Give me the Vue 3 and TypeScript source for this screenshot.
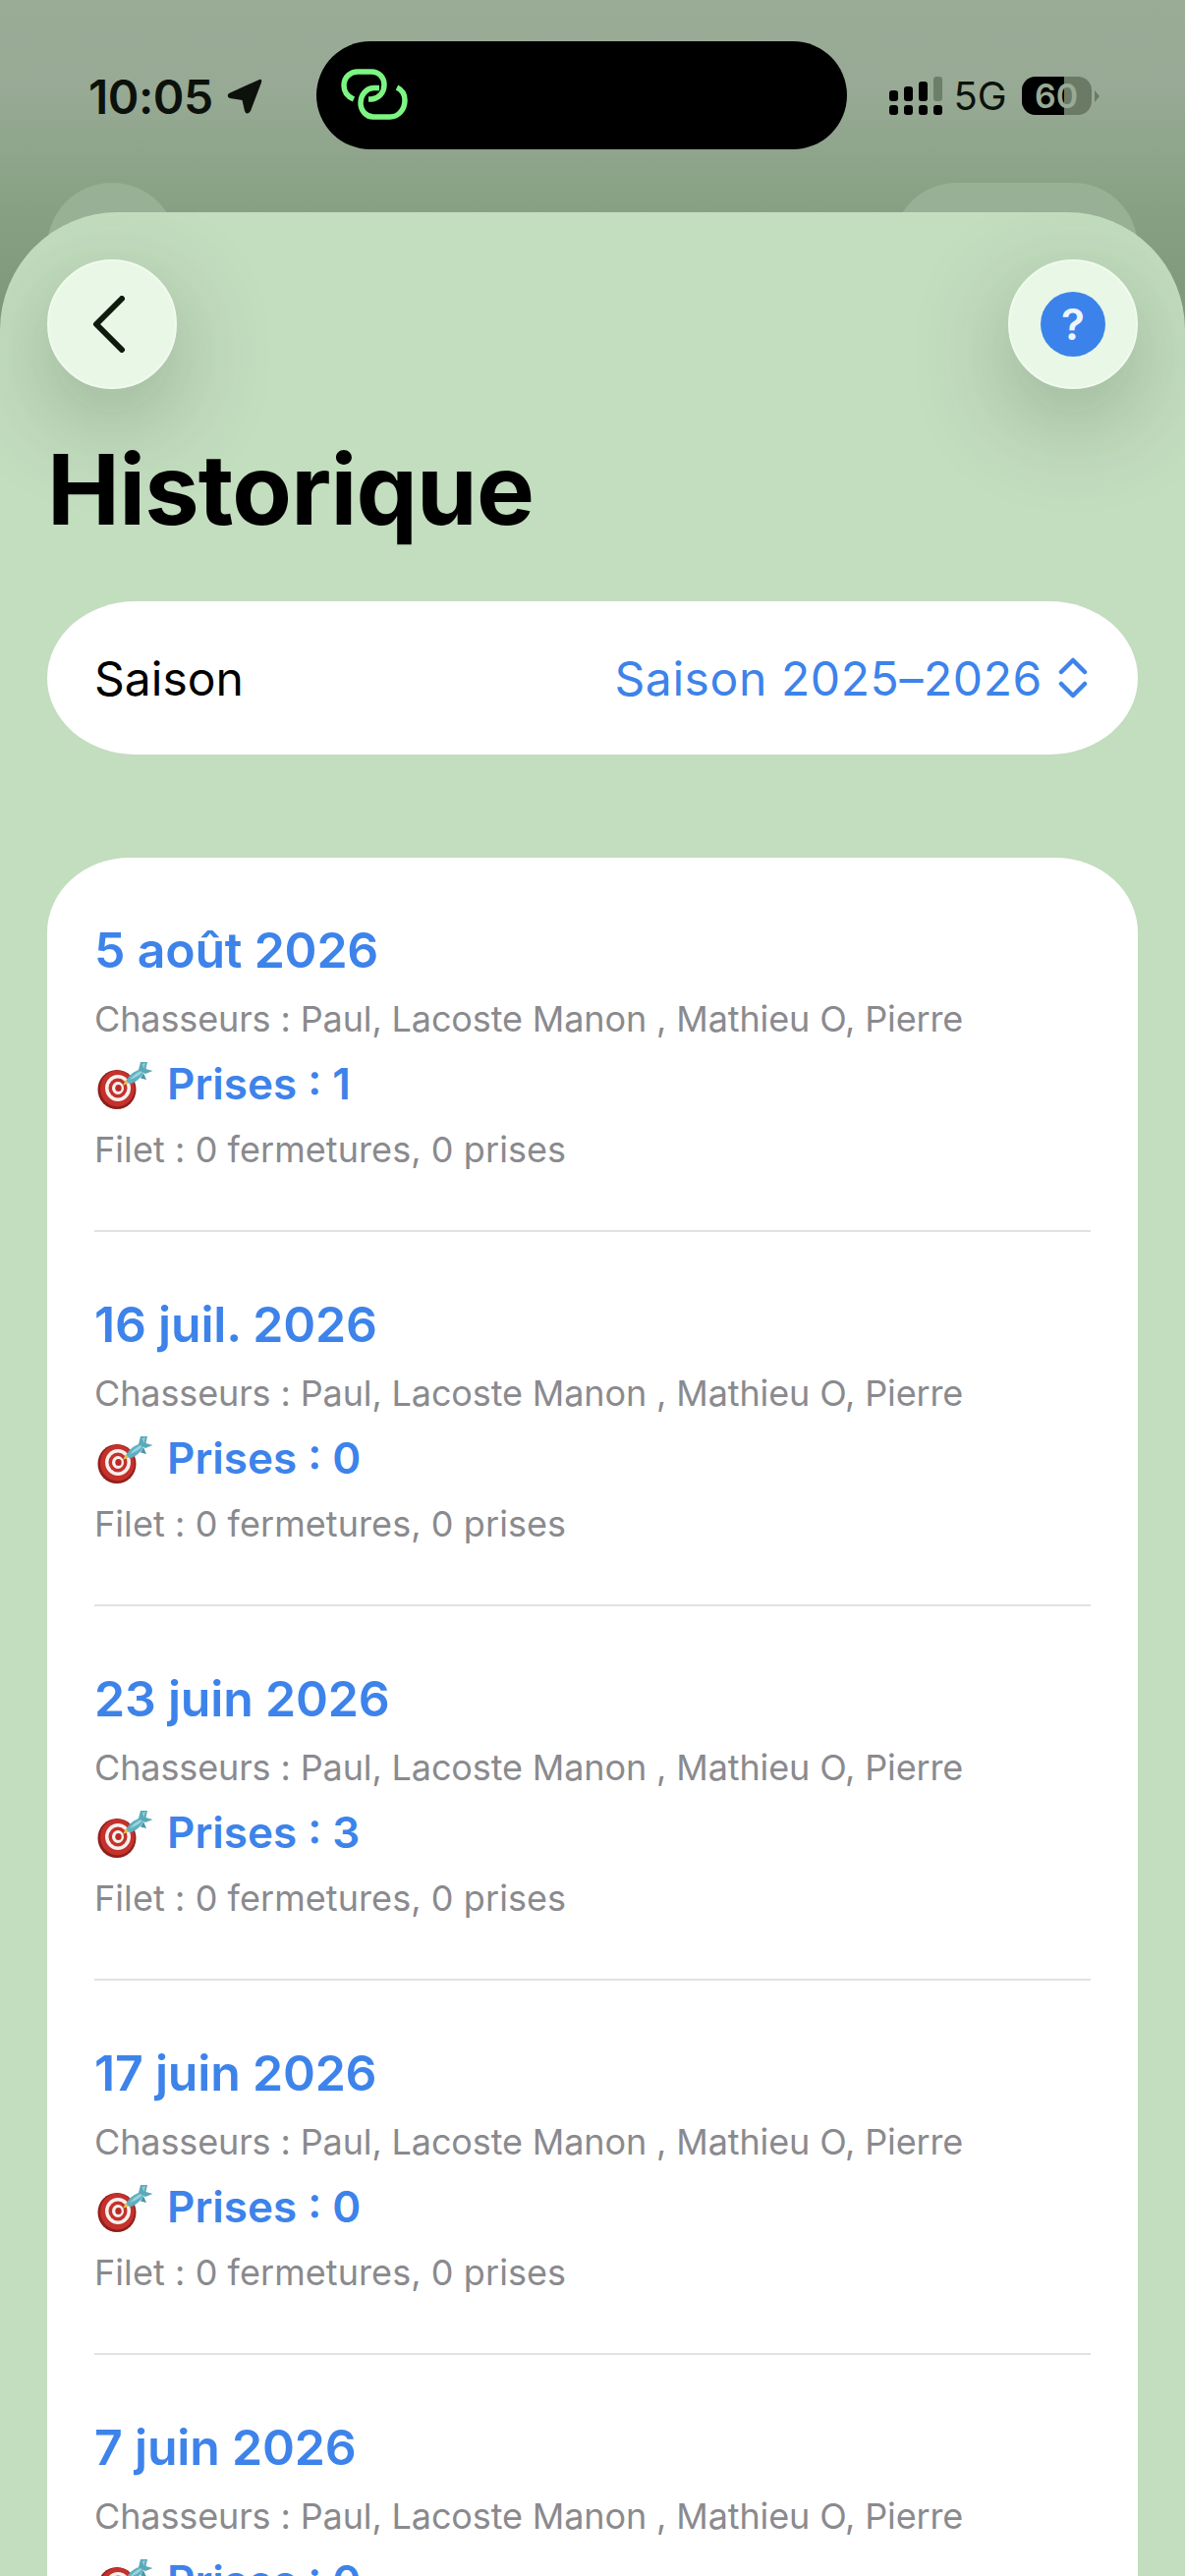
<script setup lang="ts">
interface Hunt {
  date: string;
  catches: number;
}

const hunts: Hunt[] = [
  { date: '5 août 2026', catches: 1 },
  { date: '16 juil. 2026', catches: 0 },
  { date: '23 juin 2026', catches: 3 },
  { date: '17 juin 2026', catches: 0 },
  { date: '7 juin 2026', catches: 0 },
];
</script>

<template>
  <div class="page">
    <div class="status">
      <div class="clock">
        <span class="time">10:05</span>
        <svg class="arrow" viewBox="0 0 36 36">
          <path d="M33 1 Q36 0 35 4 L24 33 Q20 38 18 33 L15.500 22 L3 20 Q-1 18 2 15 Z" fill="#0c120b" />
        </svg>
      </div>
      <div class="island">
        <svg class="link" viewBox="0 0 90 70" fill="none" stroke="#7cf582" stroke-width="5.500">
          <path d="M25 41 C18 38 15 33 15 27 C15 18 22 13 29 13 H43 C51 13 56 19 56 26 C56 35 50 40 43 41 H40" />
          <path d="M69 29 C75 32 77 37 77 42 C77 52 70 59 62 59 H45 C38 59 32 53 32 45 C32 36 38 30 45 29.500 H51" />
        </svg>
      </div>
      <div class="indicators">
        <svg class="signal" viewBox="0 0 54 39">
          <rect x="0" y="14" width="9" height="11" rx="3" />
          <rect x="15" y="10" width="9" height="15" rx="3" />
          <rect x="30" y="5" width="9" height="20" rx="3" />
          <rect x="45" y="0" width="9" height="25" rx="3" fill="#6c7f69" />
          <rect x="0" y="29" width="9" height="10" rx="3" />
          <rect x="15" y="29" width="9" height="10" rx="3" />
          <rect x="30" y="29" width="9" height="10" rx="3" />
          <rect x="45" y="29" width="9" height="10" rx="3" />
        </svg>
        <span class="network">5G</span>
        <div class="battery">
          <div class="battery-level"></div>
          <span class="battery-text">60</span>
        </div>
        <div class="battery-nub"></div>
      </div>
    </div>

    <div class="peeks">
      <div class="peek peek-left"></div>
      <div class="peek peek-right"></div>
    </div>

    <div class="sheet">
      <div class="toolbar">
        <button class="round">
          <svg class="chevron" viewBox="0 0 34 58" fill="none" stroke="#0f1a0e" stroke-width="6" stroke-linecap="round" stroke-linejoin="round">
            <path d="M30 3 L4 29 L30 55" />
          </svg>
        </button>
        <button class="round">
          <span class="help">?</span>
        </button>
      </div>

      <h1 class="title">Historique</h1>

      <div class="season">
        <span class="season-label">Saison</span>
        <span class="season-value">
          Saison 2025–2026
          <svg class="updown" viewBox="0 0 30 42" fill="none" stroke="#3d83ea" stroke-width="4.500" stroke-linecap="round" stroke-linejoin="round">
            <path d="M3 15 L15 3 L27 15" />
            <path d="M3 27 L15 39 L27 27" />
          </svg>
        </span>
      </div>

      <div class="card">
        <div v-for="hunt in hunts" :key="hunt.date" class="row">
          <div class="date">{{ hunt.date }}</div>
          <div class="hunters">Chasseurs : Paul, Lacoste Manon , Mathieu O, Pierre</div>
          <div class="catches">
            <svg class="target" viewBox="0 0 58 50">
              <ellipse cx="20" cy="29" rx="19.500" ry="20" fill="#8f1f1c" />
              <ellipse cx="20.500" cy="28" rx="17.500" ry="18.500" fill="#c5312b" />
              <ellipse cx="21" cy="27.500" rx="13" ry="13.500" fill="#f6f0ef" />
              <ellipse cx="21" cy="27.500" rx="9.500" ry="10" fill="#c5312b" />
              <ellipse cx="21" cy="27.500" rx="6" ry="6.500" fill="#f6f0ef" />
              <ellipse cx="21.500" cy="27.500" rx="3.200" ry="3.500" fill="#b92b25" />
              <path d="M26 25 L29 19 L33 22 Z" fill="#e3c24c" />
              <path d="M29.500 20 C33 13 40 8.500 47 8 C48 13 42 21 33 23.500 Z" fill="#5fb0c2" />
              <path d="M33 19 C37 14 41 11 47 9 C46 12 40 17 33 19 Z" fill="#98d4dc" />
              <path d="M42 9 L44 1 L51 1 L49.500 8 L56.500 10 L49 13 Z" fill="#5aa9b9" />
              <path d="M47 12 L50 19 L44 17.500 Z" fill="#4a97a8" />
              <path d="M45.500 3 L49 2 L47.500 8 Z" fill="#8fced7" />
            </svg>
            <span>Prises : {{ hunt.catches }}</span>
          </div>
          <div class="nets">Filet : 0 fermetures, 0 prises</div>
        </div>
      </div>
    </div>
  </div>
</template>

<style>
body {
  margin: 0;
}
</style>

<style scoped>
.page {
  width: 1206px;
  height: 2622px;
  overflow: hidden;
  font-family: Inter, 'Liberation Sans', sans-serif;
  background: linear-gradient(180deg, #9aab96 0, #98aa95 90px, #87a083 216px, #7d9579 340px);
}
.status {
  height: 186px;
  box-sizing: border-box;
  padding: 42px 0 0 90px;
  display: flex;
  align-items: flex-start;
}
.clock {
  width: 231.500px;
  height: 110px;
  display: flex;
  align-items: center;
  color: #0c120b;
}
.time {
  font-size: 48px;
  font-weight: 600;
  letter-spacing: -0.500px;
  margin-top: 2px;
}
.arrow {
  width: 36px;
  height: 36px;
  margin-left: 14px;
  margin-top: 2px;
}
.island {
  width: 540px;
  height: 110px;
  border-radius: 55px;
  background: #000;
  display: flex;
  align-items: center;
  padding-left: 13.500px;
  box-sizing: border-box;
}
.link {
  width: 90px;
  height: 70px;
  margin-top: -4px;
}
.indicators {
  display: flex;
  align-items: center;
  height: 39px;
  margin: 36px 0 0 43px;
}
.signal {
  width: 54px;
  height: 39px;
  fill: #000;
}
.network {
  margin-left: 12px;
  font-size: 40px;
  font-weight: 400;
  color: #0c120b;
}
.battery {
  position: relative;
  width: 71px;
  height: 39px;
  margin-left: 15px;
  border-radius: 14px;
  overflow: hidden;
  background: #6a7a67;
  display: flex;
  align-items: center;
  justify-content: center;
}
.battery-level {
  position: absolute;
  left: 0;
  top: 0;
  bottom: 0;
  width: 43px;
  background: #000;
}
.battery-text {
  position: relative;
  font-size: 34px;
  font-weight: 600;
  color: #98aa95;
}
.battery-nub {
  width: 0;
  height: 0;
  margin-left: 3px;
  border-left: 5px solid #6a7a67;
  border-top: 6px solid transparent;
  border-bottom: 6px solid transparent;
}
.peeks {
  height: 132px;
  padding: 0 48px;
  display: flex;
  justify-content: space-between;
}
.peek {
  height: 132px;
  background: #98b096;
  border-radius: 66px;
}
.peek-left {
  width: 132px;
}
.peek-right {
  width: 250px;
}
.sheet {
  position: relative;
  margin-top: -102px;
  height: 2406px;
  box-sizing: border-box;
  padding: 48px 48px 0;
  border-radius: 120px 120px 0 0;
  overflow: hidden;
  background: #c3ddbf;
}
.toolbar {
  display: flex;
  justify-content: space-between;
}
.round {
  width: 132px;
  height: 132px;
  padding: 0;
  border: 2px solid #f0faed;
  border-radius: 50%;
  background: #e8f7e6;
  box-shadow: 0 30px 100px rgba(40, 60, 40, 0.3);
  display: flex;
  align-items: center;
  justify-content: center;
}
.chevron {
  width: 34px;
  height: 58px;
  margin-left: -6px;
}
.help {
  width: 66px;
  height: 66px;
  border-radius: 50%;
  background: #3b83ea;
  color: #eef5fd;
  font-family: Inter, sans-serif;
  font-size: 44px;
  font-weight: 600;
  line-height: 66px;
  text-align: center;
}
.title {
  margin: 42px 0 0;
  font-size: 99px;
  line-height: 120px;
  font-weight: 700;
  letter-spacing: -0.800px;
  color: #000;
}
.season {
  margin-top: 54px;
  height: 156px;
  box-sizing: border-box;
  padding: 0 51px 0 48px;
  border-radius: 90px / 78px;
  background: #fff;
  display: flex;
  align-items: center;
  justify-content: space-between;
  font-size: 48px;
}
.season-label {
  color: #000;
}
.season-value {
  color: #3d83ea;
  letter-spacing: 0.600px;
  display: flex;
  align-items: center;
  gap: 16px;
}
.updown {
  width: 30px;
  height: 42px;
}
.card {
  margin-top: 105px;
  padding: 0 48px;
  border-radius: 84px 84px 0 0 / 76px 76px 0 0;
  background: #fff;
}
.row {
  height: 381px;
  box-sizing: border-box;
  padding-top: 64px;
  border-bottom: 2px solid #e2e2e4;
}
.date {
  font-size: 50px;
  letter-spacing: -0.200px;
  line-height: 60px;
  font-weight: 600;
  color: #3d83ea;
}
.hunters,
.nets {
  font-size: 36px;
  line-height: 44px;
  color: #8a8a8e;
}
.hunters {
  margin-top: 18px;
  letter-spacing: -0.130px;
}
.catches {
  margin-top: 16px;
  display: flex;
  align-items: center;
  gap: 13px;
  font-size: 44px;
  line-height: 56px;
  font-weight: 600;
  color: #3d83ea;
}
.target {
  width: 58px;
  height: 50px;
  margin: 3px 0 0 3px;
}
.nets {
  margin-top: 17px;
  letter-spacing: 0.070px;
}
</style>
